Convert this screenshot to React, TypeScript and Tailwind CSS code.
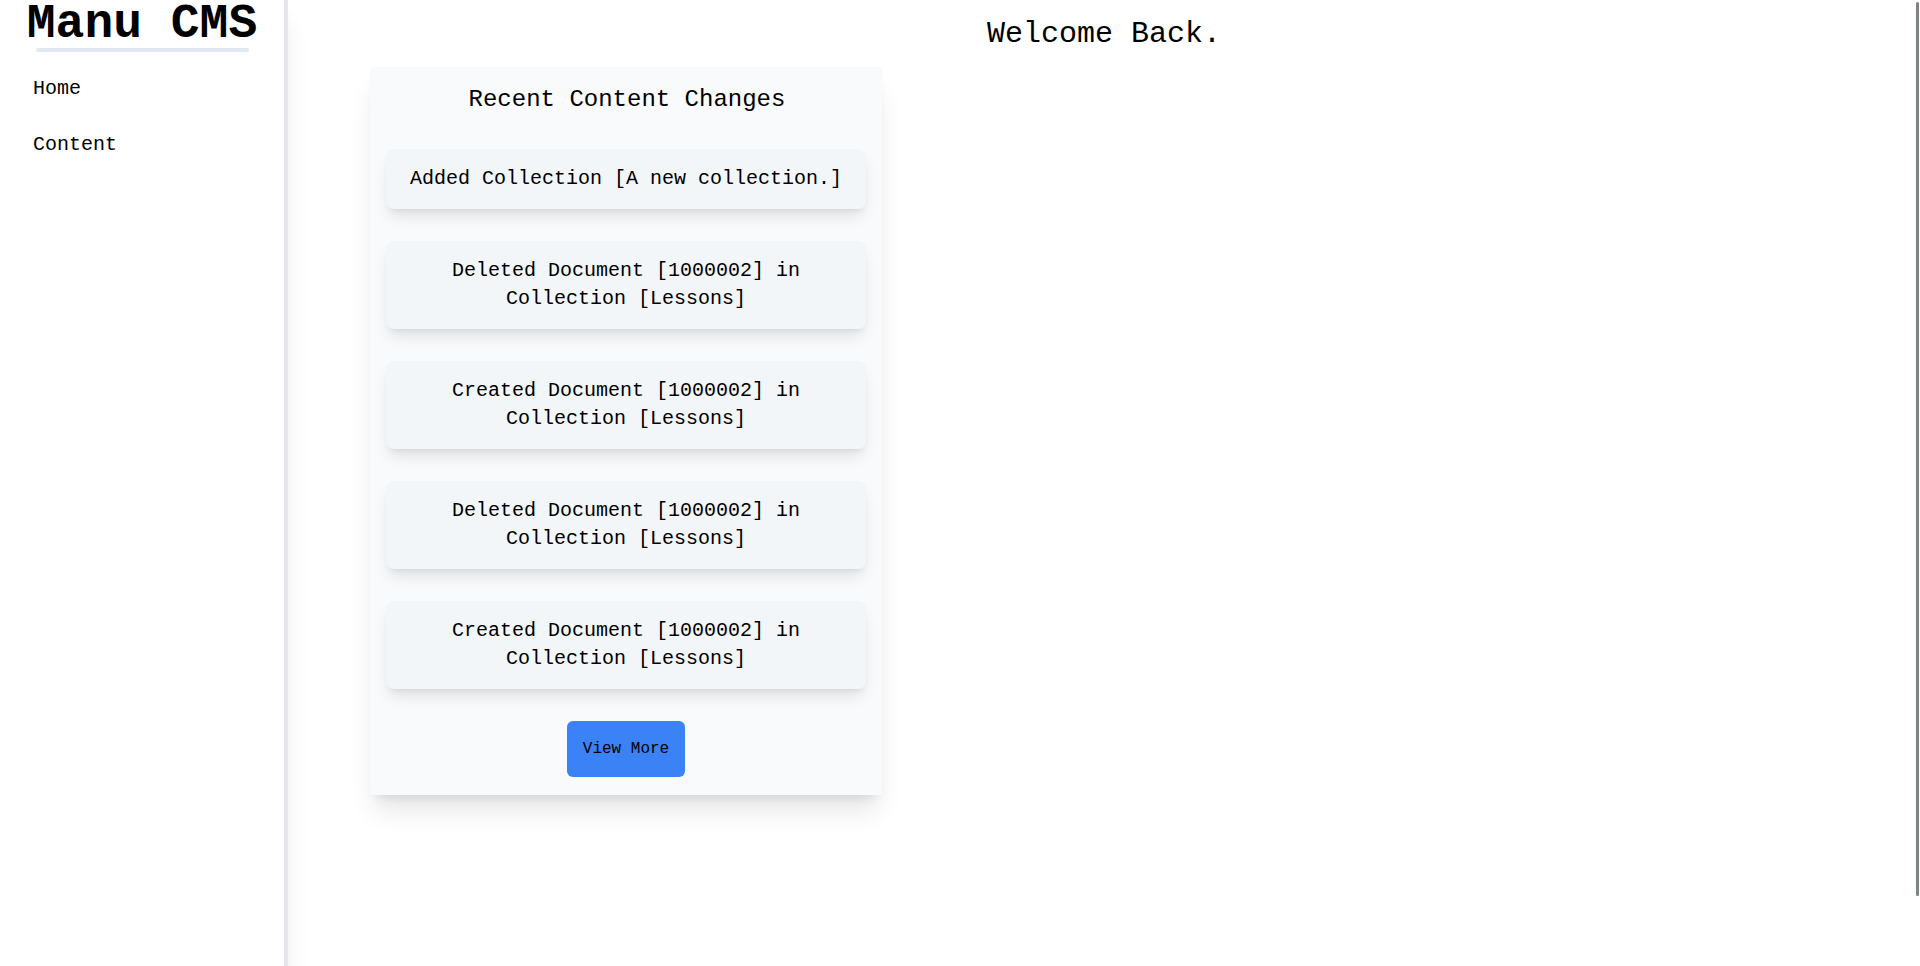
import React from 'react'

const changes = [
  'Added Collection [A new collection.]',
  'Deleted Document [1000002] in Collection [Lessons]',
  'Created Document [1000002] in Collection [Lessons]',
  'Deleted Document [1000002] in Collection [Lessons]',
  'Created Document [1000002] in Collection [Lessons]',
]

function Sidebar() {
  return (
    <aside className="w-72 shrink-0 bg-white border-r-4 border-[#e5e7eb] shadow-xl flex flex-col">
      <h1 className="text-5xl leading-[52px] -mt-[2px] -mb-[2px] font-bold text-center text-black">Manu CMS</h1>
      <div className="w-3/4 h-1 mx-auto bg-[#e2e8f0] rounded-full" />
      <nav className="mt-[9px] flex flex-col">
        <a href="#" className="pl-[33px] py-[14px] text-xl text-black">Home</a>
        <a href="#" className="pl-[33px] py-[14px] text-xl text-black">Content</a>
      </nav>
    </aside>
  )
}

function RecentChanges() {
  return (
    <div className="w-128 ml-[82px] bg-[#f8fafc] shadow-xl px-4 pt-[17px] pb-[18px] flex flex-col items-stretch">
      <h2 className="text-2xl leading-8 text-center text-black pl-[2px]">Recent Content Changes</h2>
      <div className="mt-[33px] flex flex-col gap-8">
        {changes.map((c, i) => (
          <div key={i} className="bg-[#f3f6f9] rounded-lg shadow-lg px-4 py-4 text-xl text-center text-black">
            {c}
          </div>
        ))}
      </div>
      <div className="mt-8 flex justify-center">
        <button className="bg-[#3b82f6] text-black text-base px-4 py-4 rounded-md">View More</button>
      </div>
    </div>
  )
}

export default function App() {
  return (
    <div className="relative flex h-screen overflow-hidden bg-white" style={{ fontFamily: '"Liberation Mono", monospace' }}>
      <Sidebar />
      <main className="flex-1 pt-4 flex flex-col">
        <h1 className="text-3xl text-center text-black mb-[15px]">Welcome Back.</h1>
        <RecentChanges />
      </main>
      {/* overlay scrollbar thumb */}
      <div className="absolute right-[1px] top-[2px] w-[3px] h-[894px] bg-[#7f8381] rounded-full" />
    </div>
  )
}
